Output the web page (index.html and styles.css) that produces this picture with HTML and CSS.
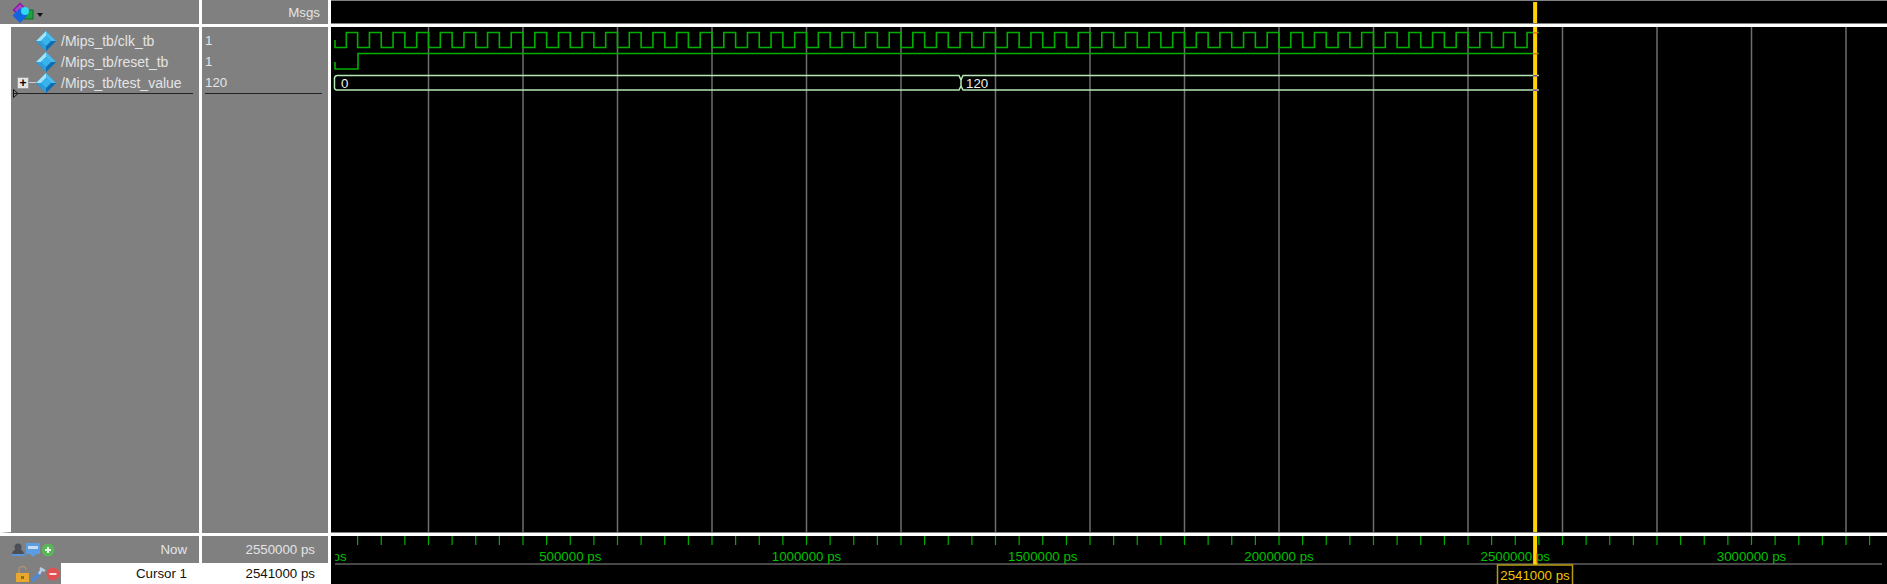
FILE: index.html
```html
<!DOCTYPE html>
<html lang="en">
<head>
    <meta charset="UTF-8">
    <meta name="viewport" content="width=device-width, initial-scale=1.0">
    <title>Wave</title>
    <link rel="stylesheet" href="styles.css">
</head>
<body>
    <svg class="defs" width="0" height="0">
        <symbol id="diamond" viewBox="0 0 20 20">
            <polygon points="10,0 20,10 10,20 0,10" fill="#1a86c8"/>
            <polygon points="10,0 0,10 5,10 10,5" fill="#a4e4f8"/>
            <polygon points="10,0 20,10 15,10 10,5" fill="#4cbcec"/>
            <polygon points="0,10 10,20 10,15 5,10" fill="#2c9cdc"/>
            <polygon points="20,10 10,20 10,15 15,10" fill="#106cb0"/>
            <polygon points="10,5 15,10 10,15 5,10" fill="#38b4ec"/>
        </symbol>
    </svg>

    <div class="app">
        <div class="head head-names">
            <svg class="logo" viewBox="0 0 24 24" width="24" height="24">
                <polygon points="1.500,10 8,3.500 14.500,10 8,16" fill="#a848c0" stroke="#8a18a8" stroke-width="1.500"/>
                <rect x="11" y="10" width="10" height="9" fill="#20a040" stroke="#0c7028"/>
                <polygon points="8,8 15.500,15.500 8,23 0.500,15.500" fill="#1464e0"/>
                <circle cx="13" cy="11" r="4" fill="#30d8f0"/>
            </svg>
            <span class="caret"></span>
        </div>
        <div class="head head-msgs">Msgs</div>
        <div class="wave-pane wave-head">
            <svg id="wave-top" viewBox="331 0 1556 24" width="1556" height="24"></svg>
        </div>

        <div class="names">
            <div class="sig-list">
                <div class="sig-row">
                    <svg class="sig-icon"><use href="#diamond"/></svg>
                    <span>/Mips_tb/clk_tb</span>
                </div>
                <div class="sig-row">
                    <svg class="sig-icon"><use href="#diamond"/></svg>
                    <span>/Mips_tb/reset_tb</span>
                </div>
                <div class="sig-row">
                    <span class="expander">+</span>
                    <span class="branch"></span>
                    <svg class="sig-icon"><use href="#diamond"/></svg>
                    <span>/Mips_tb/test_value</span>
                </div>
                <svg class="insert-mark" viewBox="0 0 6 9" width="6" height="9">
                    <polygon points="0.500,0.500 5,4.500 0.500,8.500" fill="none" stroke="#111"/>
                </svg>
            </div>
        </div>
        <div class="msgs">
            <div class="msg-list">
                <div class="msg-row">1</div>
                <div class="msg-row">1</div>
                <div class="msg-row">120</div>
            </div>
        </div>
        <div class="wave-pane wave-main">
            <svg id="wave-main" viewBox="331 27 1556 506" width="1556" height="506"></svg>
        </div>

        <div class="foot-names">
            <div class="foot-row now-row">
                <div class="tools">
                    <svg viewBox="0 0 44 16" width="44" height="16">
                        <circle cx="7" cy="5" r="3.500" fill="#4a4f58"/>
                        <path d="M1 12 Q2 7 7 7 Q12 7 13 12 Z" fill="#4a4f58"/>
                        <path d="M1 13 H14" stroke="#5c94d8" stroke-width="2"/>
                        <rect x="15" y="1" width="14" height="11" fill="#5c9ce0"/>
                        <rect x="17" y="4" width="10" height="3" fill="#c8dcf0"/>
                        <polygon points="19,12 25,12 22,15" fill="#5c9ce0"/>
                        <circle cx="37" cy="8" r="6.500" fill="#58b858"/>
                        <path d="M34 8 H40 M37 5 V11" stroke="#e8f8e8" stroke-width="2"/>
                    </svg>
                </div>
                <div class="foot-label">Now</div>
            </div>
            <div class="foot-row cursor-row">
                <div class="tools">
                    <svg viewBox="0 0 48 18" width="48" height="18">
                        <path d="M7 8 V5 Q7 1.500 10.500 1.500 Q14 1.500 14 5" fill="none" stroke="#a89070" stroke-width="1.500"/>
                        <rect x="4" y="8" width="13" height="9" fill="#e8a830"/>
                        <rect x="9" y="11" width="3" height="3" fill="#9a6a10"/>
                        <path d="M20 16 L28 8" stroke="#4a88d8" stroke-width="3.500"/>
                        <path d="M27 9 L30 4 M28 3 L33 6" stroke="#b8cce8" stroke-width="2.500"/>
                        <circle cx="41" cy="9" r="6.500" fill="#e05050"/>
                        <path d="M37.500 9 H44.500" stroke="#f8e0e0" stroke-width="2"/>
                    </svg>
                </div>
                <div class="foot-label foot-white">Cursor 1</div>
            </div>
        </div>
        <div class="foot-msgs">
            <div class="foot-row now-row"><div class="foot-value">2550000 ps</div></div>
            <div class="foot-row cursor-row"><div class="foot-value foot-white">2541000 ps</div></div>
        </div>
        <div class="wave-pane">
            <svg id="wave-axis" viewBox="331 536 1556 48" width="1556" height="48">
                <defs>
                    <clipPath id="axis-clip"><rect x="335" y="536" width="1552" height="48"/></clipPath>
                </defs>
            </svg>
        </div>
    </div>

    <script src="wave.js"></script>
</body>
</html>
```

FILE: styles.css
```css
* {
    box-sizing: border-box;
}
body {
    margin: 0;
    background-color: white;
    font-family: "Liberation Sans", Arial, sans-serif;
    font-size: 13.3px;
    color: #e4e4e4;
    overflow: hidden;
}
.defs {
    position: absolute;
}
.app {
    display: grid;
    grid-template-columns: 199px 126px 1556px;
    grid-template-rows: 24px 506px 48px;
    gap: 3px;
    width: 1887px;
    height: 584px;
}
.head, .names, .msgs, .foot-names, .foot-msgs {
    background-color: #808080;
}
.head {
    display: flex;
    align-items: center;
}
.head-names {
    padding-left: 12px;
}
.caret {
    width: 0;
    height: 0;
    margin: 5px 0 0 1px;
    border-left: 3.5px solid transparent;
    border-right: 3.5px solid transparent;
    border-top: 4px solid #111;
}
.head-msgs {
    justify-content: flex-end;
    padding-right: 8px;
}
.wave-pane {
    background-color: black;
    overflow: hidden;
}
.wave-pane svg {
    display: block;
}
.wave-head {
    border-top: 1px solid #808080;
    border-bottom: 1px solid #808080;
}
.wave-head svg {
    margin-top: -1px;
}
.wave-main {
    border-bottom: 1px solid #808080;
}

/* signal list */
.names {
    border-left: 11px solid white;
    border-bottom: 1px solid #808080;
    padding: 3px 6px 0 3px;
}
.sig-list {
    position: relative;
    border-bottom: 1px solid #222;
}
.sig-row {
    display: flex;
    align-items: center;
    height: 21px;
    padding-left: 22px;
    font-size: 14px;
}
.sig-icon {
    flex: none;
    width: 20px;
    height: 20px;
    margin-right: 5px;
}
.sig-row span {
    white-space: nowrap;
}
.sig-row .expander {
    width: 12px;
    height: 12px;
    margin-left: -19px;
    background-color: #e4e4e4;
    border: 1px solid #999;
    color: black;
    font-size: 12px;
    font-weight: bold;
    line-height: 10px;
    text-align: center;
}
.sig-row .branch {
    width: 7px;
    height: 1px;
    background-color: #d0d0d0;
}
.insert-mark {
    position: absolute;
    left: -1px;
    bottom: -5px;
}
.msgs {
    padding: 3px 6px 0 3px;
}
.msg-list {
    border-bottom: 1px solid #222;
}
.msg-row {
    display: flex;
    align-items: center;
    height: 21px;
}

/* footer */
.foot-row {
    display: flex;
}
.now-row {
    height: 27px;
    align-items: center;
}
.cursor-row {
    height: 21px;
}
.tools {
    flex: none;
    display: flex;
    align-items: center;
    width: 61px;
    padding-left: 11px;
}
.cursor-row .tools {
    padding-left: 12px;
}
.foot-label, .foot-value {
    flex: 1;
    display: flex;
    align-items: center;
    justify-content: flex-end;
    height: 100%;
}
.foot-label {
    padding-right: 12px;
}
.foot-value {
    padding-right: 13px;
}
.foot-white {
    background-color: white;
    color: #111;
}

/* wave canvas */
.grid-line {
    stroke: #6e6e6e;
    stroke-width: 1.5;
}
.clk {
    fill: none;
    stroke: #00b000;
    stroke-width: 1.6;
}
.bus {
    fill: none;
    stroke: #b4e8b4;
    stroke-width: 1.5;
}
.bus-text {
    fill: #f0f0f0;
    font-size: 13.3px;
}
.cursor-line {
    fill: #ffd400;
}
.tick {
    stroke: #00b000;
    stroke-width: 1.2;
}
.axis-line {
    stroke: #606060;
    stroke-width: 1.5;
}
.axis-text {
    fill: #00c000;
    font-size: 13.3px;
    text-anchor: middle;
}
.cursor-box {
    fill: black;
    stroke: #b89a10;
    stroke-width: 1.5;
}
.cursor-text {
    fill: #f4c400;
    font-size: 13.3px;
    text-anchor: middle;
}
```

FILE: wave.js
```js
// time axis: 0 ps sits at x=334, 1000 ps is 0.4725 px
var X0 = 334;
var SCALE = 0.4725 / 1000;
var END_TIME = 2550000;
var CURSOR_TIME = 2541000;

function timeX(ps) {
    return X0 + ps * SCALE;
}

var cursorX = timeX(CURSOR_TIME);
var cursorRect = function (y, h) {
    return '<rect class="cursor-line" x="' + (cursorX - 1.5) + '" y="' + y + '" width="4" height="' + h + '"/>';
};

// grid lines every 200000 ps
var main = '';
for (var i = 1; i <= 16; i++) {
    var gx = timeX(200000 * i);
    main += '<line class="grid-line" x1="' + gx + '" x2="' + gx + '" y1="27" y2="533"/>';
}

// clk_tb: low first, period 50000 ps
var clk = 'M335 40 V47.5 H' + (timeX(25000) + 0.5);
for (var t = 25000; t < END_TIME; t += 50000) {
    clk += ' V32.5 H' + timeX(Math.min(t + 25000, END_TIME));
    if (t + 25000 < END_TIME) {
        clk += ' V47.5 H' + timeX(Math.min(t + 50000, END_TIME));
    }
}
main += '<path class="clk" d="' + clk + '"/>';

// reset_tb
main += '<path class="clk" d="M335 62 V69 H358 V53.500 H' + timeX(END_TIME) + '"/>';

// test_value bus, 0 then 120
var endX = timeX(END_TIME);
main += '<path class="bus" d="M337 75.500 Q334 76 334.500 80 V86 Q334 90 337 90 H959 L961 86 V80 L959 75.500 H337"/>';
main += '<path class="bus" d="M961 80 L963 75.500 H' + endX + ' M961 86 L963 90 H' + endX + '"/>';
main += '<text class="bus-text" x="341" y="87.500">0</text>';
main += '<text class="bus-text" x="966" y="87.500">120</text>';

main += cursorRect(27, 506);
main += '<rect x="' + (cursorX - 1.5) + '" y="32" width="4" height="1.500" fill="#ff6a20"/>';
main += '<rect x="' + (cursorX - 1.5) + '" y="53" width="4" height="1.500" fill="#ff6a20"/>';
main += '<rect x="' + (cursorX - 1.5) + '" y="75" width="4" height="1.500" fill="#7050c0"/>';
main += '<rect x="' + (cursorX - 1.5) + '" y="89.500" width="4" height="1.500" fill="#7050c0"/>';
document.getElementById('wave-main').innerHTML = main;

document.getElementById('wave-top').innerHTML = cursorRect(2, 22);

// axis ticks every 50000 ps, long one every 250000 ps
var axis = document.getElementById('wave-axis').innerHTML;
for (var k = 1; k <= 65; k++) {
    var tx = timeX(50000 * k);
    var top = k % 5 === 0 ? 536 : 540;
    axis += '<line class="tick" x1="' + tx + '" x2="' + tx + '" y1="' + top + '" y2="545"/>';
}
axis += '<line class="axis-line" x1="335" x2="1882" y1="564" y2="564"/>';
axis += '<g clip-path="url(#axis-clip)">';
for (var n = 0; n <= 6; n++) {
    var ps = 500000 * n;
    axis += '<text class="axis-text" x="' + timeX(ps) + '" y="561">' + ps + ' ps</text>';
}
axis += '</g>';
axis += cursorRect(536, 29);
axis += '<line x1="' + (cursorX + 2.5) + '" x2="' + (cursorX + 2.5) + '" y1="553" y2="563" stroke="#e02020"/>';
axis += '<rect class="cursor-box" x="1497.500" y="565" width="75" height="22"/>';
axis += '<text class="cursor-text" x="1535" y="580">2541000 ps</text>';
document.getElementById('wave-axis').innerHTML = axis;
```
